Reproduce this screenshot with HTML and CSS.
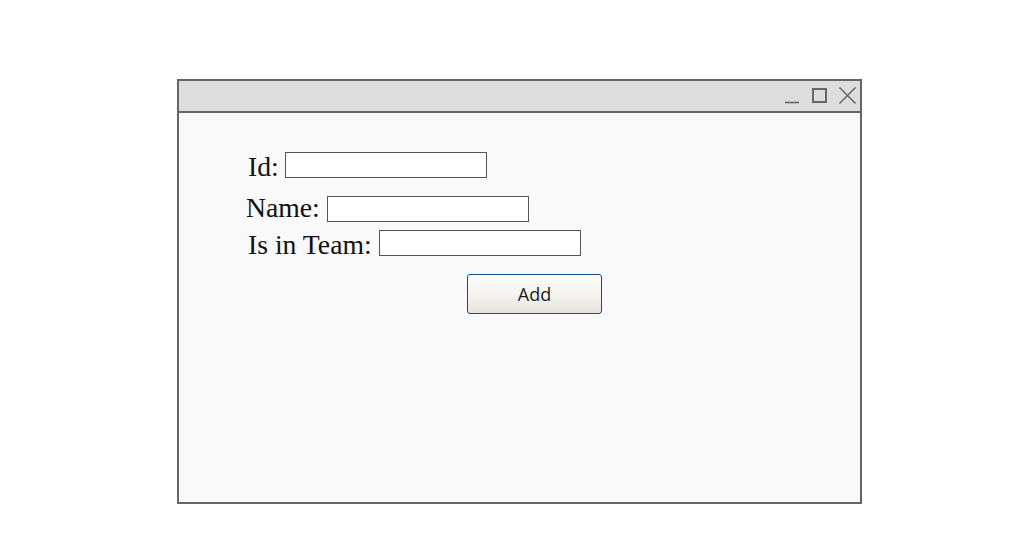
FILE: index.html
```html
<!DOCTYPE html>
<html>
<head>
<meta charset="utf-8">
<link rel="stylesheet" href="styles.css">
</head>
<body>
<div class="window">
  <div class="titlebar">
    <svg class="controls" width="80" height="30" viewBox="0 0 80 30">
      <line x1="5" y1="21.5" x2="19" y2="21.5" stroke="#666" stroke-width="1.6"/>
      <rect x="33" y="8" width="13" height="13" fill="none" stroke="#666" stroke-width="2"/>
      <line x1="59.5" y1="6.5" x2="75.5" y2="22.5" stroke="#666" stroke-width="1.6"/>
      <line x1="75.5" y1="6.5" x2="59.5" y2="22.5" stroke="#666" stroke-width="1.6"/>
    </svg>
  </div>
  <div class="content">
    <div class="row row-id">
      <span class="label">Id:</span>
      <div class="field"></div>
    </div>
    <div class="row row-name">
      <span class="label">Name:</span>
      <div class="field"></div>
    </div>
    <div class="row row-team">
      <span class="label">Is in Team:</span>
      <div class="field"></div>
    </div>
    <button class="btn">Add</button>
  </div>
</div>
</body>
</html>
```
FILE: styles.css
```css
html, body {
  margin: 0;
  padding: 0;
  background: #ffffff;
}
body {
  padding: 79px 0 0 177px;
}
.window {
  box-sizing: border-box;
  width: 685px;
  height: 425px;
  border: 2px solid #666666;
  background: #f9f9f9;
  display: flex;
  flex-direction: column;
}
.titlebar {
  height: 30px;
  background: #dddddd;
  border-bottom: 2px solid #666666;
  display: flex;
  justify-content: flex-end;
  align-items: flex-start;
}
.controls {
  display: block;
}
.content {
  flex: 1;
  padding: 39px 0 0 0;
  display: flex;
  flex-direction: column;
  align-items: flex-start;
}
.row {
  display: flex;
  align-items: flex-start;
  height: 30px;
}
.label {
  font-family: "Liberation Serif", "Times New Roman", serif;
  font-size: 27.7px;
  line-height: 30px;
  color: #111111;
  margin-right: 7px;
}
.field {
  box-sizing: border-box;
  width: 202px;
  height: 26px;
  background: #ffffff;
  border: 1px solid #555555;
}
.row-id {
  margin-left: 69px;
}
.row-id .label {
  margin-right: 6px;
}
.row-name {
  margin-left: 67px;
  margin-top: 11px;
}
.row-name .field {
  margin-top: 3px;
}
.row-team {
  margin-left: 69px;
  margin-top: 7px;
}
.btn {
  box-sizing: border-box;
  margin: 14px 0 0 288px;
  width: 135px;
  height: 40px;
  border: 1px solid #0e4f8c;
  border-radius: 3px;
  background: linear-gradient(#fcfcfa 0%, #f4f3ef 55%, #e6e4dc 100%);
  font-family: "Open Sans", "Noto Sans", sans-serif;
  font-size: 18px;
  color: #1b1b1b;
  padding: 0;
}
```
